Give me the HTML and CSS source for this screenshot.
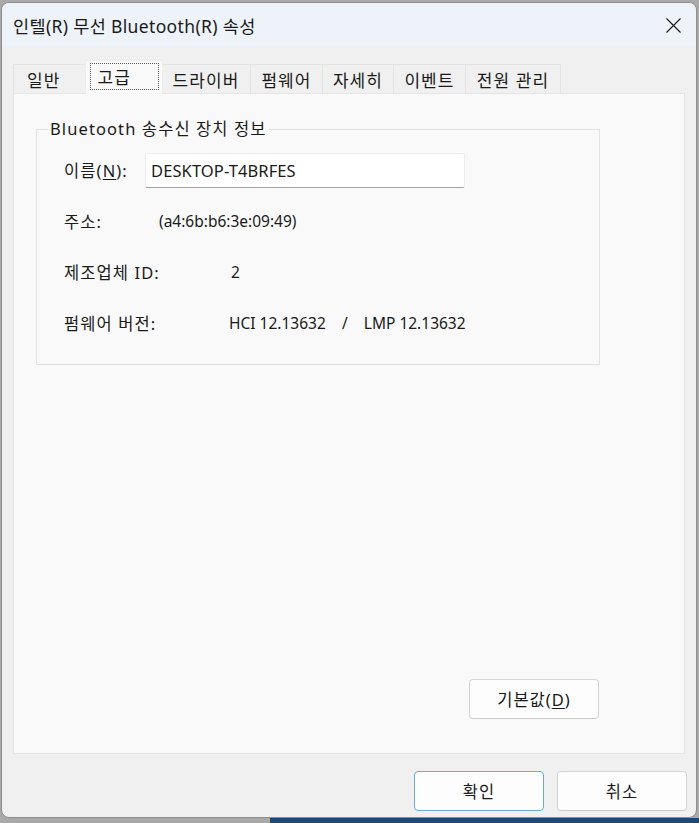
FILE: index.html
```html
<!DOCTYPE html>
<html lang="ko">
<head>
<meta charset="utf-8">
<title>인텔(R) 무선 Bluetooth(R) 속성</title>
<link rel="stylesheet" href="styles.css">
</head>
<body>
<div class="desk">
  <div class="window">
    <div class="titlebar">
      <span class="title">인텔(R) 무선 Bluetooth(R) 속성</span>
      <span class="close" aria-label="닫기">
        <svg width="15" height="15" viewBox="0 0 15 15"><path d="M0.5 0.5 L14.5 14.5 M14.5 0.5 L0.5 14.5" stroke="#1a1a1a" stroke-width="1.1" fill="none"/></svg>
      </span>
    </div>
    <div class="content">
      <div class="tabs">
        <div class="tab t1">일반</div>
        <div class="tab active"><span class="focus">고급</span></div>
        <div class="tab t3">드라이버</div>
        <div class="tab t4">펌웨어</div>
        <div class="tab t5">자세히</div>
        <div class="tab t6">이벤트</div>
        <div class="tab t7">전원 관리</div>
      </div>
      <div class="panel">
        <fieldset class="group">
          <legend>Bluetooth 송수신 장치 정보</legend>
          <div class="row">
            <span class="label">이름(<u>N</u>):</span>
            <div class="input">DESKTOP-T4BRFES</div>
          </div>
          <div class="row">
            <span class="label">주소:</span>
            <span class="value v-addr">(a4:6b:b6:3e:09:49)</span>
          </div>
          <div class="row">
            <span class="label">제조업체 ID:</span>
            <span class="value v-id">2</span>
          </div>
          <div class="row">
            <span class="label">펌웨어 버전:</span>
            <span class="value v-fw">HCI 12.13632    /    LMP 12.13632</span>
          </div>
        </fieldset>
        <div class="spacer"></div>
        <div class="defrow">
          <button class="btn">기본값(<u>D</u>)</button>
        </div>
      </div>
      <div class="footer">
        <button class="btn primary">확인</button>
        <button class="btn">취소</button>
      </div>
    </div>
  </div>
  <div class="taskstrip"></div>
</div>
</body>
</html>
```

FILE: styles.css
```css
* { box-sizing: border-box; }
html, body {
  margin: 0;
  padding: 0;
  width: 699px;
  height: 823px;
  overflow: hidden;
  background: #a9a9a9;
  font-family: "Noto Sans", "Noto Sans CJK KR", sans-serif;
  color: #1a1a1a;
}
.desk {
  position: relative;
  width: 699px;
  height: 823px;
  padding: 2px 2px 0 1px;
}
.taskstrip {
  position: absolute;
  left: 270px;
  right: 0;
  bottom: 0;
  height: 5px;
  background: #1d4a73;
}
.window {
  position: relative;
  z-index: 1;
  width: 696px;
  height: 816px;
  background: #f0f0f0;
  border: 1px solid #8e8e8e;
  border-radius: 8px;
  overflow: hidden;
  display: flex;
  flex-direction: column;
}
.titlebar {
  height: 44px;
  background: #eef2f9;
  display: flex;
  align-items: center;
  justify-content: space-between;
  padding: 0 15px 0 11px;
  flex: none;
}
.title {
  font-size: 17.5px;
  letter-spacing: 0.35px;
  color: #1a1a1a;
}
.close { display: flex; margin-top: 1px; }
.content {
  flex: 1;
  display: flex;
  flex-direction: column;
  padding: 0 11px 0 11px;
}
.tabs {
  display: flex;
  align-items: flex-end;
  height: 47px;
}
.tab {
  height: 30px;
  border: 1px solid #e3e3e3;
  border-bottom: none;
  margin-right: -1px;
  display: flex;
  align-items: center;
  justify-content: center;
  font-size: 17px;
  letter-spacing: 1.1px;
  background: #f0f0f0;
  color: #1a1a1a;
  flex: none;
}
.t1 { width: 75px; justify-content: flex-start; padding-left: 13px; }
.t3 { width: 90px; }
.t4 { width: 73px; }
.t5 { width: 72px; }
.t6 { width: 73px; }
.t7 { width: 96px; }
.tab.active {
  width: 78px;
  height: 34px;
  margin: 0 -2px 0 -2px;
  background: #f9f9f9;
  position: relative;
  z-index: 2;
  align-items: flex-start;
  padding-top: 2px;
  border-color: #ececec;
}
.focus {
  display: flex;
  align-items: center;
  padding-left: 7px;
  width: 69px;
  height: 27px;
  border: 1px dotted #5a5a5a;
}
.panel {
  height: 661px;
  width: 672px;
  background: #f9f9f9;
  border: 1px solid #e5e5e5;
  margin-top: -1px;
  display: flex;
  flex-direction: column;
  padding: 24px 0 34px 22px;
}
.group {
  margin: 0;
  width: 564px;
  height: 247px;
  border: 1px solid #e2e2e2;
  padding: 13px 0 0 11px;
  display: flex;
  flex-direction: column;
  gap: 17px;
}
.group legend {
  font-size: 16.5px;
  letter-spacing: 1.1px;
  padding: 0 2px;
  line-height: 22px;
}
.row {
  display: flex;
  align-items: center;
  height: 34px;
  font-size: 16.5px;
  padding-left: 16px;
}
.label {
  width: 81px;
  flex: none;
  letter-spacing: 1.1px;
  white-space: nowrap;
}
.label u, .btn u { text-decoration-thickness: 1px; text-underline-offset: 2px; }
.input {
  width: 320px;
  height: 35px;
  background: #ffffff;
  border: 1px solid #ececec;
  border-bottom: 1px solid #a3a3a3;
  border-radius: 2px;
  display: flex;
  align-items: center;
  padding-left: 5px;
  font-size: 16.5px;
  letter-spacing: 0.1px;
}
.value { white-space: pre; font-size: 15.5px; letter-spacing: 0; }
.v-addr { margin-left: 14px; }
.v-id { margin-left: 86px; }
.v-fw { margin-left: 84px; }
.spacer { flex: 1; }
.defrow {
  display: flex;
  justify-content: flex-end;
  padding-right: 85px;
}
.btn {
  width: 130px;
  height: 40px;
  background: #fdfdfd;
  border: 1px solid #d6d6d6;
  border-bottom-color: #cbcbcb;
  border-radius: 4px;
  font-family: "Noto Sans", "Noto Sans CJK KR", sans-serif;
  font-size: 16.5px;
  letter-spacing: 1px;
  color: #1a1a1a;
  padding: 0;
}
.btn.primary {
  border: 1px solid #6aa7e4;
}
.footer {
  display: flex;
  justify-content: flex-end;
  gap: 13px;
  padding: 17px 0 0 0;
  margin-right: -2px;
}
```
